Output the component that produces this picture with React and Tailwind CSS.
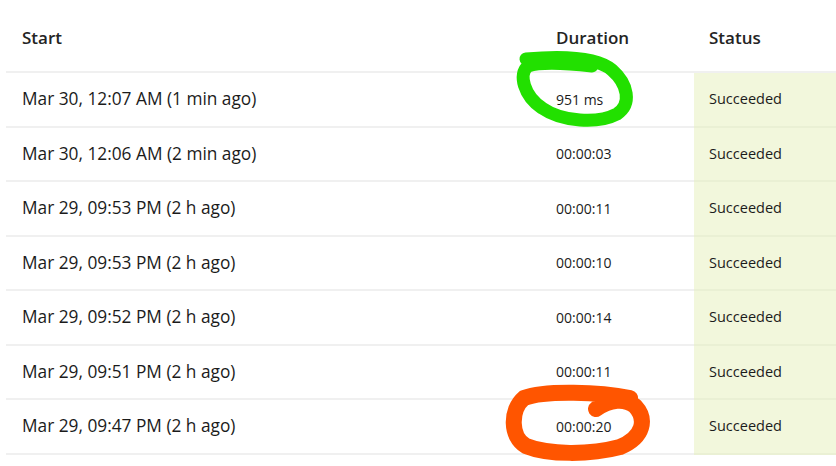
const rows = [
  { start: "Mar 30, 12:07 AM (1 min ago)", duration: "951 ms" },
  { start: "Mar 30, 12:06 AM (2 min ago)", duration: "00:00:03" },
  { start: "Mar 29, 09:53 PM (2 h ago)", duration: "00:00:11" },
  { start: "Mar 29, 09:53 PM (2 h ago)", duration: "00:00:10" },
  { start: "Mar 29, 09:52 PM (2 h ago)", duration: "00:00:14" },
  { start: "Mar 29, 09:51 PM (2 h ago)", duration: "00:00:11" },
  { start: "Mar 29, 09:47 PM (2 h ago)", duration: "00:00:20" },
];

const font = { fontFamily: '"Open Sans", "Noto Sans", sans-serif' };

// hand-drawn highlight marks on top of the table
function Annotations() {
  return (
    <svg
      className="pointer-events-none absolute inset-0"
      width="836"
      height="466"
      viewBox="0 0 836 466"
      fill="none"
      aria-hidden
    >
      <path
        d="M 592 66 C 565 63, 540 62, 528 66 C 518 74, 524 96, 542 108 C 562 122, 598 124, 617 114 C 632 104, 628 84, 612 70 C 597 57, 560 56, 526 59"
        stroke="#22e000"
        strokeWidth="13"
        strokeLinecap="round"
        strokeLinejoin="round"
      />
      <path
        d="M 596 409 C 610 399, 625 398, 635 406 C 647 419, 644 437, 620 447 C 590 455, 548 455, 526 446 C 510 437, 510 410, 524 398 C 545 390, 600 392, 630 398"
        stroke="#ff5500"
        strokeWidth="16"
        strokeLinecap="round"
        strokeLinejoin="round"
      />
    </svg>
  );
}

export default function App() {
  return (
    <div
      className="relative h-[466px] w-[836px] overflow-hidden bg-white text-[#1b1b1b]"
      style={font}
    >
      <div className="ml-[6px] grid grid-cols-[534px_154px_1fr]">
        <div className="flex h-[73px] items-center border-b-2 border-[#f0f0f0] pl-4 pt-[5px] text-[17px] font-semibold text-[#242424]">
          Start
        </div>
        <div className="flex h-[73px] items-center border-b-2 border-[#f0f0f0] pl-4 pt-[5px] text-[17px] font-semibold text-[#242424]">
          Duration
        </div>
        <div className="flex h-[73px] items-center border-b-2 border-[#f0f0f0] pl-[15px] pt-[5px] text-[17px] font-semibold text-[#242424]">
          Status
        </div>

        {rows.map((r, i) => (
          <div key={i} className="contents">
            <div className="flex h-[54.5px] items-center border-b-2 border-[#f0f0f0] pl-4 text-[17.3px]">
              {r.start}
            </div>
            <div className="flex h-[54.5px] items-center border-b-2 border-[#f0f0f0] pl-4 text-[14px]">
              {r.duration}
            </div>
            <div className="flex h-[54.5px] items-center border-b-2 border-[#eaf0d4] bg-[#f2f7dc] pl-[15px] text-[14.5px]">
              Succeeded
            </div>
          </div>
        ))}
      </div>
      <Annotations />
    </div>
  );
}
